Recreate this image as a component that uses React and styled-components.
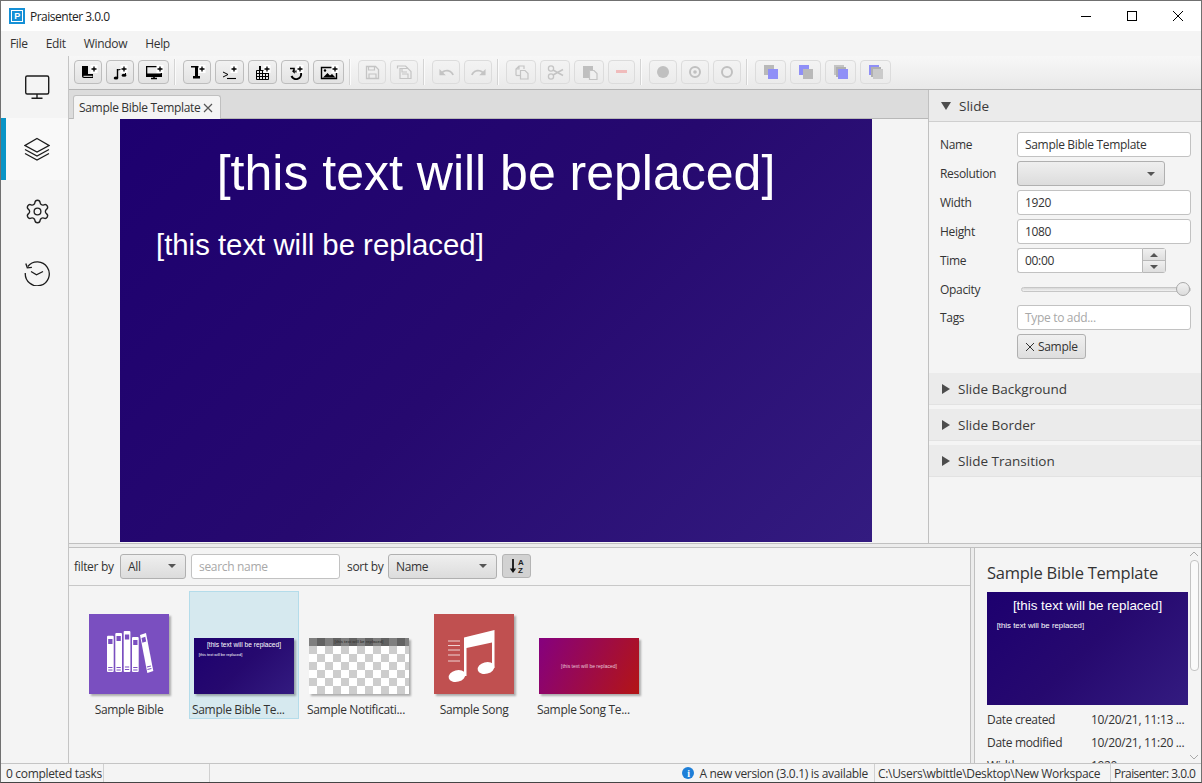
import React from "react";
import styled, { createGlobalStyle } from "styled-components";
import { Settings } from "lucide-react";
import { MdUndo, MdRedo } from "react-icons/md";

const Global = createGlobalStyle`
  html, body { margin: 0; padding: 0; background: #4a4a4a; }
  * { box-sizing: border-box; }
`;

const UI_FONT = `"Open Sans", "Noto Sans", sans-serif`;

const Window = styled.div`
  width: 1202px;
  height: 783px;
  display: flex;
  flex-direction: column;
  overflow: hidden;
  background: #f4f4f4;
  border: 1px solid #707070;
  border-bottom-color: #444;
  font-family: ${UI_FONT};
  font-size: 12px;
  letter-spacing: -0.32px;
  color: #333;
`;

/* title bar */
const TitleBar = styled.div`
  height: 30px;
  flex: none;
  display: flex;
  align-items: center;
  background: #fff;
  padding-left: 8px;
  color: #222;
`;
const Logo = styled.div`
  width: 16px;
  height: 16px;
  margin-right: 5px;
  display: flex;
  align-items: center;
  justify-content: center;
  background: #1590d6;
  border: 2px solid #1590d6;
  box-shadow: inset 0 0 0 1px #fff;
  font: bold 9px "Liberation Sans", sans-serif;
  color: #fff;
`;
const TitleText = styled.div`
  flex: 1;
  letter-spacing: -0.5px;
`;
const WinButton = styled.div`
  width: 46px;
  height: 30px;
  display: flex;
  align-items: center;
  justify-content: center;
`;

/* menu */
const MenuBar = styled.div`
  height: 25px;
  flex: none;
  display: flex;
  align-items: center;
  gap: 18px;
  padding-left: 9px;
  background: #f4f4f4;
`;
const MenuItem = styled.span``;

const Body = styled.div`
  flex: 1;
  min-height: 0;
  display: flex;
`;

/* left navigation */
const Sidebar = styled.nav`
  width: 68px;
  flex: none;
  background: #f4f4f4;
  border-right: 1px solid #c4c4c4;
`;
const NavItem = styled.div`
  height: 62px;
  display: flex;
  align-items: center;
  justify-content: center;
  background: ${(p) => (p.$active ? "#f9f9f9" : "transparent")};
  border-left: 5px solid ${(p) => (p.$active ? "#0a94c6" : "transparent")};
  color: #222;
`;

const Main = styled.div`
  flex: 1;
  min-width: 0;
  display: flex;
  flex-direction: column;
`;

/* toolbar */
const Toolbar = styled.div`
  height: 34px;
  flex: none;
  display: flex;
  align-items: center;
  gap: 4px;
  padding: 0 0 1px 5px;
  background: linear-gradient(#f7f7f7, #e9e9e9);
  border-bottom: 1px solid #b4b4b4;
`;
const ToolButton = styled.div`
  width: ${(p) => p.$w || 28}px;
  height: 24px;
  flex: none;
  display: flex;
  align-items: center;
  justify-content: center;
  border: 1px solid ${(p) => (p.$off ? "#dcdcdc" : "#bdbdbd")};
  border-radius: 4px;
  background: ${(p) => (p.$off ? "linear-gradient(#f3f3f3, #ebebeb)" : "linear-gradient(#f2f2f2, #e2e2e2)")};
  color: ${(p) => (p.$off ? "#c4c4c4" : "#000")};
`;
const ToolSep = styled.div`
  width: 2px;
  height: 26px;
  flex: none;
  margin: 0 3px 0 1px;
  background: #fbfbfb;
  border-left: 1px solid #d4d4d4;
`;

/* editor + properties */
const TopRow = styled.div`
  height: 453px;
  flex: none;
  display: flex;
`;
const Editor = styled.div`
  flex: 1;
  min-width: 0;
  display: flex;
  flex-direction: column;
`;
const TabStrip = styled.div`
  height: 29px;
  flex: none;
  display: flex;
  align-items: flex-end;
  padding-left: 4px;
  background: #dcdcdc;
  border-bottom: 1px solid #b8b8b8;
`;
const Tab = styled.div`
  width: 148px;
  height: 24px;
  margin-bottom: -1px;
  display: flex;
  align-items: center;
  justify-content: space-between;
  padding: 0 7px 0 5px;
  background: #f4f4f4;
  border: 1px solid #c0c0c0;
  border-bottom: none;
  border-radius: 3px 3px 0 0;
`;
const Canvas = styled.div`
  flex: 1;
  padding-left: 51px;
  background: #f4f4f4;
`;

const SlideArt = styled.div`
  width: ${(p) => p.$w}px;
  height: ${(p) => Math.round((p.$w * 9) / 16)}px;
  font-size: ${(p) => (p.$w / 752) * 100}px;
  padding-top: 0.3em;
  overflow: hidden;
  background: linear-gradient(135deg, #1d006f 0%, #26096f 50%, #331b80 100%);
  color: #fff;
  font-family: "Liberation Sans", Arial, sans-serif;
  letter-spacing: 0;
`;
const SlideTitle = styled.div`
  font-size: 0.5em;
  line-height: 0.96;
  text-align: center;
  white-space: nowrap;
`;
const SlideBody = styled.div`
  font-size: 0.2935em;
  line-height: 1;
  margin-top: 1.13em;
  padding-left: 1.227em;
  white-space: nowrap;
`;

/* properties */
const Props = styled.aside`
  width: 273px;
  flex: none;
  border-left: 1px solid #c0c0c0;
  background: #f4f4f4;
`;
const SectionHead = styled.div`
  height: 32px;
  display: flex;
  align-items: center;
  gap: 8px;
  padding-left: 12px;
  margin-bottom: ${(p) => (p.$gap ? 4 : 0)}px;
  background: #ebebeb;
  border-bottom: 1px solid ${(p) => (p.$open ? "#cfcfcf" : "#e2e2e2")};
  font-size: 13.5px;
  color: #3a3a3a;
  letter-spacing: 0;
`;
const Arrow = styled.span`
  width: 0;
  height: 0;
  ${(p) =>
    p.$open
      ? `border-left: 5px solid transparent; border-right: 5px solid transparent; border-top: 8px solid #4d4d4d;`
      : `border-top: 5px solid transparent; border-bottom: 5px solid transparent; border-left: 8px solid #4d4d4d; margin-left: 1px;`}
`;
const Form = styled.div`
  display: grid;
  grid-template-columns: 77px 1fr;
  grid-template-rows: repeat(5, 25px) 24px 25px 25px;
  row-gap: 4px;
  align-items: center;
  padding: 10px 10px 14px 11px;
`;
const Label = styled.label`
  color: #333;
`;
const Input = styled.div`
  height: 25px;
  width: ${(p) => (p.$w ? `${p.$w}px` : "100%")};
  display: flex;
  align-items: center;
  padding: 0 7px;
  background: #fff;
  border: 1px solid ${(p) => p.$line || "#c2c2c2"};
  border-radius: 3px;
  color: ${(p) => (p.$hint ? "#a8a8a8" : "#333")};
  overflow: hidden;
  white-space: nowrap;
`;
const Combo = styled.div`
  height: 25px;
  width: ${(p) => p.$w}px;
  flex: none;
  display: flex;
  align-items: center;
  justify-content: space-between;
  padding: 0 9px 0 7px;
  background: linear-gradient(#efefef, #dcdcdc);
  border: 1px solid #b0b0b0;
  border-radius: 3px;
`;
const Caret = styled.span`
  width: 0;
  height: 0;
  border-left: 4px solid transparent;
  border-right: 4px solid transparent;
  border-top: 4px solid #555;
`;
const Spinner = styled.div`
  display: flex;
  width: 149px;
`;
const SpinField = styled(Input)`
  flex: 1;
  border-radius: 3px 0 0 3px;
  border-right: none;
`;
const SpinArrows = styled.div`
  width: 24px;
  display: flex;
  flex-direction: column;
  border: 1px solid #b8b8b8;
  border-radius: 0 3px 3px 0;
`;
const SpinCell = styled.div`
  flex: 1;
  display: flex;
  align-items: center;
  justify-content: center;
  background: linear-gradient(#f0f0f0, #dedede);
  & + & {
    border-top: 1px solid #b8b8b8;
  }
`;
const SpinUp = styled.span`
  width: 0;
  height: 0;
  border-left: 4px solid transparent;
  border-right: 4px solid transparent;
  border-bottom: 4px solid #555;
`;
const Slider = styled.div`
  display: flex;
  align-items: center;
  justify-content: flex-end;
  height: 5px;
  margin-left: 4px;
  background: linear-gradient(#d8d8d8, #f2f2f2);
  border: 1px solid #c6c6c6;
  border-radius: 3px;
`;
const Thumb = styled.span`
  width: 14px;
  height: 14px;
  flex: none;
  border-radius: 50%;
  border: 1px solid #a8a8a8;
  background: linear-gradient(#f2f2f2, #dcdcdc);
`;
const TagChip = styled.div`
  width: 69px;
  height: 25px;
  display: flex;
  align-items: center;
  gap: 3px;
  padding-left: 7px;
  background: linear-gradient(#f0f0f0, #dedede);
  border: 1px solid #b0b0b0;
  border-radius: 3px;
`;
const EmptyCell = styled.div``;

/* splitters */
const HSplit = styled.div`
  height: 5px;
  flex: none;
  background: #ececec;
  border-top: 1px solid #c0c0c0;
  border-bottom: 1px solid #c0c0c0;
`;
const VSplit = styled.div`
  width: 5px;
  flex: none;
  background: #ececec;
  border-left: 1px solid #c0c0c0;
  border-right: 1px solid #c0c0c0;
`;

/* bottom library */
const BottomRow = styled.div`
  flex: 1;
  min-height: 0;
  display: flex;
`;
const Library = styled.div`
  flex: 1;
  min-width: 0;
  display: flex;
  flex-direction: column;
`;
const FilterBar = styled.div`
  height: 38px;
  flex: none;
  display: flex;
  align-items: center;
  padding: 0 0 1px 5px;
  border-bottom: 1px solid #c8c8c8;
`;
const FilterLabel = styled.span`
  width: ${(p) => p.$w}px;
  flex: none;
`;
const SearchBox = styled(Input)`
  margin: 0 7px 0 5px;
  flex: none;
`;
const SortToggle = styled.div`
  width: 29px;
  height: 24px;
  margin-left: 5px;
  display: flex;
  align-items: center;
  justify-content: center;
  background: #d2d2d2;
  border: 1px solid #b4b4b4;
  border-radius: 3px;
`;
const TileGrid = styled.div`
  display: flex;
  gap: 5px;
  padding: 5px 0 0 5px;
`;
const Tile = styled.div`
  width: 110px;
  height: 128px;
  display: flex;
  flex-direction: column;
  align-items: center;
  background: ${(p) => (p.$sel ? "#d6e9ef" : "transparent")};
  border: 1px solid ${(p) => (p.$sel ? "#b4dcea" : "transparent")};
`;
const TileImage = styled.div`
  height: 102px;
  flex: none;
  display: flex;
  align-items: flex-end;
`;
const Shadowed = styled.div`
  box-shadow: 2px 2px 2px rgba(0, 0, 0, 0.3);
`;
const TileIcon = styled(Shadowed)`
  width: 80px;
  height: 80px;
  background: ${(p) => p.$bg};
`;
const TileLabel = styled.div`
  margin-top: 7px;
  white-space: nowrap;
  align-self: ${(p) => (p.$clip ? "flex-start" : "center")};
  margin-left: ${(p) => (p.$clip ? 2 : 0)}px;
`;
const Checker = styled(Shadowed)`
  width: 100px;
  height: 56px;
  background: repeating-conic-gradient(#cdcdcd 0 25%, #fff 0 50%) 0 0 / 16px 16px;
`;
const NoticeBand = styled.div`
  height: 8px;
  background: repeating-linear-gradient(90deg, #7f7f7f 0 8px, #626262 8px 16px);
  color: #3c3c3c;
  font: bold 4px/8px "Liberation Sans", sans-serif;
  letter-spacing: 0;
  text-align: center;
  white-space: nowrap;
`;
const SongTemplate = styled(Shadowed)`
  width: 100px;
  height: 56px;
  display: flex;
  align-items: center;
  justify-content: center;
  background: linear-gradient(115deg, #85007f 0%, #b31515 100%);
  color: #e8c8d8;
  font: 5px "Liberation Sans", sans-serif;
  letter-spacing: 0;
`;

/* detail */
const Detail = styled.div`
  width: 226px;
  flex: none;
  display: flex;
  overflow: hidden;
`;
const DetailBody = styled.div`
  width: 212px;
  flex: none;
  padding-left: 12px;
`;
const DetailTitle = styled.div`
  height: 44px;
  padding-top: 13px;
  font-size: 16.5px;
  line-height: 24px;
  letter-spacing: -0.25px;
  white-space: nowrap;
`;
const MetaGrid = styled.div`
  display: grid;
  grid-template-columns: 104px 1fr;
  grid-auto-rows: 23px;
  margin-top: 3px;
  align-items: center;
  white-space: nowrap;
`;
const MetaCell = styled.div``;
const ScrollBar = styled.div`
  width: 14px;
  flex: none;
  display: flex;
  flex-direction: column;
  align-items: center;
  justify-content: space-between;
  padding: 3px 0;
`;
const ScrollThumb = styled.div`
  width: 9px;
  height: 111px;
  background: #fafafa;
  border: 1px solid #c4c4c4;
  border-radius: 4px;
  margin-bottom: auto;
  margin-top: 3px;
`;

/* status */
const StatusBar = styled.div`
  height: 19px;
  flex: none;
  display: flex;
  align-items: center;
  background: #f4f4f4;
  border-top: 1px solid #c4c4c4;
  white-space: nowrap;
`;
const StatusCell = styled.div`
  height: 100%;
  width: ${(p) => (p.$w ? `${p.$w}px` : "auto")};
  flex: ${(p) => (p.$grow ? 1 : "none")};
  display: flex;
  align-items: center;
  justify-content: ${(p) => (p.$end ? "flex-end" : "flex-start")};
  gap: 5px;
  padding: 0 ${(p) => (p.$end ? 6 : 0)}px 0 3px;
  letter-spacing: ${(p) => (p.$tight ? "-0.55px" : "inherit")};
  &:first-child {
    padding-left: 5px;
  }
  & + & {
    border-left: 1px solid #d0d0d0;
  }
`;
const InfoDot = styled.span`
  width: 12px;
  height: 12px;
  border-radius: 50%;
  background: #1e7fd8;
  color: #fff;
  display: flex;
  align-items: center;
  justify-content: center;
  font: bold 10px "Liberation Serif", serif;
`;

/* drawings */
const Plus = ({ x = 18 }) => (
  <>
    <rect x={x - 3.5} y="4" width="7" height="8" fill="#fff" />
    <path d={`M${x} 5.500v5M${x - 2.500} 8h5`} stroke="#000" strokeWidth="1.300" />
  </>
);
const Ico = ({ children, w = 28 }) => (
  <svg width={w - 2} height="22" viewBox={`0 0 ${w - 2} 22`} fill="none">
    {children}
  </svg>
);

const toolIcons = {
  book: (
    <Ico>
      <path d="M7 5h6v8h5v4H9C7.800 17 7 16.200 7 15z" fill="#000" />
      <path d="M8.500 15.300h9" stroke="#fff" strokeWidth="1" />
      <Plus x={19} />
    </Ico>
  ),
  music: (
    <Ico>
      <path d="M10.500 8v9" stroke="#000" strokeWidth="1.400" />
      <ellipse cx="9" cy="17" rx="2.300" ry="1.600" fill="#000" />
      <path d="M10.500 9l8-1.500v6.500" stroke="#000" strokeWidth="1" />
      <ellipse cx="17" cy="14.300" rx="2.500" ry="1.500" fill="#000" />
      <Plus x={17} />
    </Ico>
  ),
  monitor: (
    <Ico w={31}>
      <path d="M7 5h16v11H7zM8.300 6.300v6.200h13.400V6.300z" fill="#000" fillRule="evenodd" />
      <path d="M12 17.500h6M15 16v1.500" stroke="#000" strokeWidth="1.600" />
      <Plus x={21} />
    </Ico>
  ),
  text: (
    <Ico>
      <path d="M7 5h11v1.500h-4V15h2v2.500H9V15h2V6.500H7z" fill="#000" />
      <Plus x={18} />
    </Ico>
  ),
  prompt: (
    <Ico w={29}>
      <path d="M7 11l5 2.500-5 2.500" stroke="#000" strokeWidth="1" />
      <path d="M11 17.500h9" stroke="#000" strokeWidth="1.100" />
      <Plus x={18} />
    </Ico>
  ),
  calendar: (
    <Ico w={29}>
      <path d="M7.500 9.500h12v9h-12zM7.500 12.500h12M7.500 15.500h12M10.500 9.500v9M13.500 9.500v9M16.500 9.500v9" stroke="#000" strokeWidth="1" />
      <path d="M10 5h2v4h-2z" fill="#000" />
      <Plus x={18} />
    </Ico>
  ),
  countdown: (
    <Ico>
      <path d="M8 7.500h4V11l-1.400-1.300" stroke="#000" strokeWidth="1.600" />
      <path d="M19 12a5 5 0 0 1-9.500 3" stroke="#000" strokeWidth="2" />
      <circle cx="14.500" cy="10.500" r="1.300" fill="#000" />
      <Plus x={18} />
    </Ico>
  ),
  image: (
    <Ico w={31}>
      <path d="M7.500 6.500h15v11h-15z" stroke="#000" strokeWidth="1.400" />
      <path d="M9 16.500l4.500-4.500 2.500 2.500 2-1.500 3.500 3.500z" fill="#000" />
      <circle cx="11" cy="9.500" r="1.200" fill="#000" />
      <Plus x={21} />
    </Ico>
  ),
  save: (
    <Ico>
      <path d="M7.500 5.500h9l3 3v9h-12z" stroke="currentColor" strokeWidth="1.300" />
      <path d="M9.500 5.500v3.500h6v-3.500M10 17.500v-4.500h7v4.500" stroke="currentColor" strokeWidth="1.200" />
    </Ico>
  ),
  saveAll: (
    <Ico>
      <path d="M6.500 7.500v-2.500h8l3 3M9 7.500h8l3 3v7H9z" stroke="currentColor" strokeWidth="1.200" />
      <path d="M11 13h6v4.500M11 8v3h5" stroke="currentColor" strokeWidth="1.100" />
    </Ico>
  ),
  copy: (
    <Ico w={30}>
      <path d="M9 14.500V8l3-3h5v3M12 5v3H9" stroke="currentColor" strokeWidth="1.200" />
      <path d="M13.500 9.500h4.500l3 3v5.500h-7.500z" stroke="currentColor" strokeWidth="1.200" />
      <path d="M9 14.500h4.500" stroke="currentColor" strokeWidth="1.200" />
    </Ico>
  ),
  cut: (
    <Ico w={30}>
      <circle cx="10" cy="7.500" r="2.600" stroke="currentColor" strokeWidth="1.300" />
      <circle cx="10" cy="15.500" r="2.600" stroke="currentColor" strokeWidth="1.300" />
      <path d="M12 9l10 5.500M12 14l10-5.500" stroke="currentColor" strokeWidth="1.500" />
    </Ico>
  ),
  paste: (
    <Ico w={30}>
      <path d="M8 5h10v4h-4v8H8z" fill="#bfbfbf" />
      <path d="M14.500 9.500h4.500l3 3v6h-7.500z" stroke="currentColor" fill="#f0f0f0" strokeWidth="1.200" />
    </Ico>
  ),
  minus: (
    <Ico w={27}>
      <rect x="7" y="9" width="11" height="3" fill="#f0bcbc" />
    </Ico>
  ),
  dot: (
    <Ico>
      <circle cx="13" cy="11" r="6" fill="#c0c0c0" />
    </Ico>
  ),
  target: (
    <Ico>
      <circle cx="13" cy="11" r="5" stroke="#c0c0c0" strokeWidth="2" />
      <circle cx="13" cy="11" r="1.800" fill="#c0c0c0" />
    </Ico>
  ),
  ring: (
    <Ico>
      <circle cx="13" cy="11" r="5" stroke="#c0c0c0" strokeWidth="2" />
    </Ico>
  ),
  front: (
    <Ico w={31}>
      <rect x="8" y="4" width="10" height="10" fill="#b9b9b9" />
      <rect x="12" y="8" width="10" height="10" fill="#8f8ff7" />
    </Ico>
  ),
  back: (
    <Ico w={31}>
      <rect x="8" y="4" width="10" height="10" fill="#8f8ff7" />
      <rect x="12" y="8" width="10" height="10" fill="#b9b9b9" />
    </Ico>
  ),
  forward: (
    <Ico w={31}>
      <rect x="8" y="4" width="10" height="10" fill="#c4c4c4" />
      <rect x="10" y="6" width="10" height="10" fill="#b0b0b0" />
      <rect x="12" y="8" width="10" height="10" fill="#8f8ff7" />
    </Ico>
  ),
  backward: (
    <Ico w={31}>
      <rect x="8" y="4" width="10" height="10" fill="#8f8ff7" />
      <rect x="10" y="6" width="10" height="10" fill="#b0b0b0" />
      <rect x="12" y="8" width="10" height="10" fill="#cacaca" />
    </Ico>
  ),
};

const toolGroups = [
  [["book"], ["music"], ["monitor", 31]],
  [["text"], ["prompt", 29], ["calendar", 29], ["countdown"], ["image", 31]],
  [["save", 28, 1], ["saveAll", 28, 1]],
  [["undo", 28, 1], ["redo", 28, 1]],
  [["copy", 30, 1], ["cut", 30, 1], ["paste", 30, 1], ["minus", 27, 1]],
  [["dot", 28, 1], ["target", 28, 1], ["ring", 28, 1]],
  [["front", 31, 1], ["back", 31, 1], ["forward", 31, 1], ["backward", 31, 1]],
];

const MonitorIcon = () => (
  <svg width="26" height="26" viewBox="0 0 26 26" fill="none" stroke="#1c1c1c" strokeWidth="1.400">
    <rect x="1.700" y="2" width="23" height="18" rx="1.500" />
    <path d="M13 20v4M7.500 24.300h11" />
  </svg>
);
const LayersIcon = () => (
  <svg width="26" height="26" viewBox="0 0 26 26" fill="none" stroke="#1c1c1c" strokeWidth="1.300">
    <path d="M13 2.500L25 9.500 13 16 1 9.500z" />
    <path d="M1 13.500L13 20l12-6.500M1 17.500L13 24l12-6.500" />
  </svg>
);
const HistoryIcon = () => (
  <svg width="26" height="26" viewBox="0 0 26 26" fill="none" stroke="#1c1c1c" strokeWidth="1.300">
    <path d="M3.800 6.500A12 12 0 1 1 1.300 13" />
    <path d="M1.800 3.500l1.500 4.300 4.600-.4" />
    <path d="M7 11.500l5.500 3.300L19 11.500" />
  </svg>
);

const BibleArt = () => (
  <svg width="80" height="80" viewBox="0 0 80 80">
    <g fill="#fff">
      <rect x="18" y="21.700" width="6.700" height="36.300" rx="1" />
      <rect x="26.300" y="19" width="6.700" height="39" rx="1" />
      <rect x="34.700" y="17" width="6.700" height="41" rx="1" />
      <rect x="43" y="23" width="6.700" height="35" rx="1" />
      <path d="M51 21l6-2 7.300 38-6 2z" />
    </g>
    <g fill="#7a4fc0">
      <rect x="19.200" y="25" width="4.300" height="5" />
      <rect x="27.500" y="22" width="4.300" height="5" />
      <rect x="35.900" y="20.500" width="4.300" height="5" />
      <rect x="44.200" y="26" width="4.300" height="5" />
      <path d="M52.500 24l3.800-1.200.9 4.800-3.800 1.200z" />
      <path d="M19.200 53h4.300v1h-4.300zM19.200 55.500h4.300v1h-4.300zM27.500 53h4.300v1h-4.300zM27.500 55.500h4.300v1h-4.300zM35.900 52.500h4.300v1h-4.300zM35.900 55h4.300v1h-4.300zM44.200 53h4.300v1h-4.300zM44.200 55.500h4.300v1h-4.300z" />
      <path d="M57.800 52.500l4-1 .2 1-4 1zM58.300 55l4-1 .2 1-4 1z" />
    </g>
  </svg>
);
const SongArt = () => (
  <svg width="80" height="80" viewBox="0 0 80 80">
    <g fill="#fff">
      <ellipse cx="23" cy="62" rx="8.500" ry="5.800" transform="rotate(-15 23 62)" />
      <ellipse cx="52" cy="54" rx="8.500" ry="5.800" transform="rotate(-15 52 54)" />
      <path d="M30 23.500L60.500 16v38h-2.500V28.500L32.500 34v28H30z" />
    </g>
    <path d="M14 27h12M14 31.500h12M14 36h12M14 41h12M14 47h12" stroke="#fff" strokeWidth="1" opacity=".75" />
  </svg>
);
const SortIcon = () => (
  <svg width="20" height="20" viewBox="0 0 20 20">
    <path d="M6 3v12" stroke="#111" strokeWidth="1.800" />
    <path d="M2.800 12.500L6 17l3.200-4.500z" fill="#111" />
    <text x="11" y="9" fontSize="8" fontWeight="700" fontFamily="Liberation Sans" fill="#222">A</text>
    <text x="11" y="17" fontSize="8" fontWeight="700" fontFamily="Liberation Sans" fill="#222">Z</text>
  </svg>
);

const Slide = ({ w }) => (
  <SlideArt $w={w}>
    <SlideTitle>[this text will be replaced]</SlideTitle>
    <SlideBody>[this text will be replaced]</SlideBody>
  </SlideArt>
);

const renderTool = (name) => {
  if (name === "undo") return <MdUndo size={17} />;
  if (name === "redo") return <MdRedo size={17} />;
  return toolIcons[name];
};

export default function App() {
  return (
    <Window>
      <Global />
      <TitleBar>
        <Logo>P</Logo>
        <TitleText>Praisenter 3.0.0</TitleText>
        <WinButton>
          <svg width="10" height="10"><path d="M0 5.500h10" stroke="#000" /></svg>
        </WinButton>
        <WinButton>
          <svg width="10" height="10"><rect x=".5" y=".5" width="9" height="9" fill="none" stroke="#000" /></svg>
        </WinButton>
        <WinButton>
          <svg width="10" height="10"><path d="M0 0l10 10M10 0L0 10" stroke="#000" /></svg>
        </WinButton>
      </TitleBar>
      <MenuBar>
        <MenuItem>File</MenuItem>
        <MenuItem>Edit</MenuItem>
        <MenuItem>Window</MenuItem>
        <MenuItem>Help</MenuItem>
      </MenuBar>
      <Body>
        <Sidebar>
          <NavItem><MonitorIcon /></NavItem>
          <NavItem $active><LayersIcon /></NavItem>
          <NavItem><Settings size={27} strokeWidth={1.2} /></NavItem>
          <NavItem><HistoryIcon /></NavItem>
        </Sidebar>
        <Main>
          <Toolbar>
            {toolGroups.map((group, i) => (
              <React.Fragment key={i}>
                {i > 0 && <ToolSep />}
                {group.map(([name, w, off]) => (
                  <ToolButton key={name} $w={w} $off={off}>
                    {renderTool(name)}
                  </ToolButton>
                ))}
              </React.Fragment>
            ))}
          </Toolbar>
          <TopRow>
            <Editor>
              <TabStrip>
                <Tab>
                  <span>Sample Bible Template</span>
                  <svg width="10" height="10"><path d="M1 1l8 8M9 1L1 9" stroke="#555" strokeWidth="1.200" /></svg>
                </Tab>
              </TabStrip>
              <Canvas>
                <Slide w={752} />
              </Canvas>
            </Editor>
            <Props>
              <SectionHead $open>
                <Arrow $open />
                Slide
              </SectionHead>
              <Form>
                <Label>Name</Label>
                <Input>Sample Bible Template</Input>
                <Label>Resolution</Label>
                <Combo $w={148}><span /><Caret /></Combo>
                <Label>Width</Label>
                <Input>1920</Input>
                <Label>Height</Label>
                <Input>1080</Input>
                <Label>Time</Label>
                <Spinner>
                  <SpinField>00:00</SpinField>
                  <SpinArrows>
                    <SpinCell><SpinUp /></SpinCell>
                    <SpinCell><Caret /></SpinCell>
                  </SpinArrows>
                </Spinner>
                <Label>Opacity</Label>
                <Slider><Thumb /></Slider>
                <Label>Tags</Label>
                <Input $hint>Type to add...</Input>
                <EmptyCell />
                <TagChip>
                  <svg width="10" height="10"><path d="M1 1l8 8M9 1L1 9" stroke="#333" /></svg>
                  Sample
                </TagChip>
              </Form>
              <SectionHead $gap><Arrow />Slide Background</SectionHead>
              <SectionHead $gap><Arrow />Slide Border</SectionHead>
              <SectionHead><Arrow />Slide Transition</SectionHead>
            </Props>
          </TopRow>
          <HSplit />
          <BottomRow>
            <Library>
              <FilterBar>
                <FilterLabel $w={46}>filter by</FilterLabel>
                <Combo $w={66}>All<Caret /></Combo>
                <SearchBox $w={149} $hint>search name</SearchBox>
                <FilterLabel $w={41}>sort by</FilterLabel>
                <Combo $w={109}>Name<Caret /></Combo>
                <SortToggle><SortIcon /></SortToggle>
              </FilterBar>
              <TileGrid>
                <Tile>
                  <TileImage><TileIcon $bg="#7a4fc0"><BibleArt /></TileIcon></TileImage>
                  <TileLabel>Sample Bible</TileLabel>
                </Tile>
                <Tile $sel>
                  <TileImage><Shadowed><Slide w={100} /></Shadowed></TileImage>
                  <TileLabel $clip>Sample Bible Te...</TileLabel>
                </Tile>
                <Tile>
                  <TileImage>
                    <Checker><NoticeBand>[this text will be replaced]</NoticeBand></Checker>
                  </TileImage>
                  <TileLabel $clip>Sample Notificati...</TileLabel>
                </Tile>
                <Tile>
                  <TileImage><TileIcon $bg="#c05050"><SongArt /></TileIcon></TileImage>
                  <TileLabel>Sample Song</TileLabel>
                </Tile>
                <Tile>
                  <TileImage><SongTemplate>[this text will be replaced]</SongTemplate></TileImage>
                  <TileLabel $clip>Sample Song Te...</TileLabel>
                </Tile>
              </TileGrid>
            </Library>
            <VSplit />
            <Detail>
              <DetailBody>
                <DetailTitle>Sample Bible Template</DetailTitle>
                <Slide w={201} />
                <MetaGrid>
                  <MetaCell>Date created</MetaCell>
                  <MetaCell>10/20/21, 11:13 ...</MetaCell>
                  <MetaCell>Date modified</MetaCell>
                  <MetaCell>10/20/21, 11:20 ...</MetaCell>
                  <MetaCell>Width</MetaCell>
                  <MetaCell>1920</MetaCell>
                </MetaGrid>
              </DetailBody>
              <ScrollBar>
                <svg width="10" height="6"><path d="M1 5l4-4 4 4" fill="none" stroke="#aaa" /></svg>
                <ScrollThumb />
                <svg width="10" height="6"><path d="M1 1l4 4 4-4" fill="none" stroke="#aaa" /></svg>
              </ScrollBar>
            </Detail>
          </BottomRow>
        </Main>
      </Body>
      <StatusBar>
        <StatusCell $w={102}>0 completed tasks</StatusCell>
        <StatusCell $w={106} />
        <StatusCell $grow $end><InfoDot>i</InfoDot>A new version (3.0.1) is available</StatusCell>
        <StatusCell $w={236}>C:\Users\wbittle\Desktop\New Workspace</StatusCell>
        <StatusCell $w={91} $tight>Praisenter: 3.0.0</StatusCell>
      </StatusBar>
    </Window>
  );
}
